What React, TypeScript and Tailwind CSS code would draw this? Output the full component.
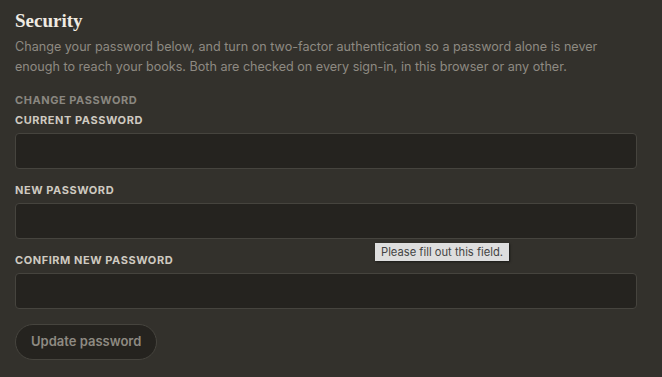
import React from "react";

export default function App() {
  return (
    <div className="min-h-[377px] w-full bg-[#33312c] px-[15px] pt-[9px] font-['Inter',sans-serif]">
      <h2 className="font-['Liberation_Serif',serif] text-[19px] font-bold leading-[24px] text-[#efebe3]">
        Security
      </h2>
      <p className="mt-[4px] max-w-[605px] text-[12.6px] leading-[20px] text-[#8e8a82]">
        Change your password below, and turn on two-factor authentication so a password alone is never enough to reach your books. Both are checked on every sign-in, in this browser or any other.
      </p>
      <div className="mt-[16px] text-[11px] font-bold uppercase leading-[14px] tracking-[0.05em] text-[#8a8780]">
        Change password
      </div>
      <form className="mt-[6px] flex flex-col">
        <label className="text-[11px] font-bold uppercase leading-[14px] tracking-[0.05em] text-[#cfcac1]">
          Current password
        </label>
        <input
          type="password"
          className="mt-[6px] h-[36px] w-[622px] rounded-[4px] border border-[#46443e] bg-[#25231f] px-3 text-[13px] text-[#e0dcd4] outline-none"
        />
        <label className="mt-[14px] text-[11px] font-bold uppercase leading-[14px] tracking-[0.05em] text-[#cfcac1]">
          New password
        </label>
        <div className="relative">
          <input
            type="password"
            className="mt-[6px] h-[36px] w-[622px] rounded-[4px] border border-[#46443e] bg-[#25231f] px-3 text-[13px] text-[#e0dcd4] outline-none"
          />
          <div className="absolute left-[360px] top-[46px] z-10 flex h-[18px] items-center bg-[#dedede] px-[6px] text-[11.2px] text-[#444] shadow-[1px_1px_2px_rgba(0,0,0,0.5)]">
            Please fill out this field.
          </div>
        </div>
        <label className="mt-[14px] text-[11px] font-bold uppercase leading-[14px] tracking-[0.05em] text-[#cfcac1]">
          Confirm new password
        </label>
        <input
          type="password"
          className="mt-[6px] h-[36px] w-[622px] rounded-[4px] border border-[#46443e] bg-[#25231f] px-3 text-[13px] text-[#e0dcd4] outline-none"
        />
        <div className="mt-[15px]">
          <button
            type="button"
            className="h-[36px] rounded-full border border-[#46443e] bg-[#25231f] px-[15px] text-[13px] font-semibold text-[#8e8a82]"
          >
            Update password
          </button>
        </div>
      </form>
    </div>
  );
}
